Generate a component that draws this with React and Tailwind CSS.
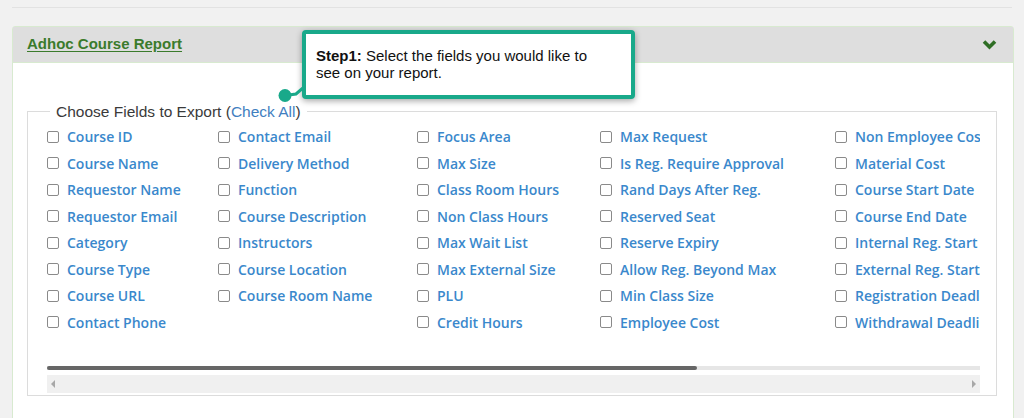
import React from 'react';

const columns = [
    { w: 'w-[171px]', items: ['Course ID', 'Course Name', 'Requestor Name', 'Requestor Email', 'Category', 'Course Type', 'Course URL', 'Contact Phone'] },
    { w: 'w-[199px]', items: ['Contact Email', 'Delivery Method', 'Function', 'Course Description', 'Instructors', 'Course Location', 'Course Room Name'] },
    { w: 'w-[183px]', items: ['Focus Area', 'Max Size', 'Class Room Hours', 'Non Class Hours', 'Max Wait List', 'Max External Size', 'PLU', 'Credit Hours'] },
    { w: 'w-[235px]', items: ['Max Request', 'Is Reg. Require Approval', 'Rand Days After Reg.', 'Reserved Seat', 'Reserve Expiry', 'Allow Reg. Beyond Max', 'Min Class Size', 'Employee Cost'] },
    { w: 'w-[200px]', items: ['Non Employee Cost', 'Material Cost', 'Course Start Date', 'Course End Date', 'Internal Reg. Start Date', 'External Reg. Start Date', 'Registration Deadline', 'Withdrawal Deadline'] },
];

const FieldCheck = ({ label }) => (
    <label className="flex items-center h-[26.5px] whitespace-nowrap cursor-pointer">
        <span className="w-[12px] h-[12px] shrink-0 rounded-[2px] border border-[#8a8a8a] bg-white" />
        <span className="ml-[8px] text-[14px] font-semibold text-[#3a88cc] font-['Open_Sans',sans-serif]">{label}</span>
    </label>
);

export default function App() {
    return (
        <div className="w-[1024px] h-[418px] overflow-hidden bg-[#f1f1f1] font-['Liberation_Sans',Arial,sans-serif]">
            <div className="h-[7px]" />
            <div className="mx-3 h-px bg-[#e2e2e2]" />

            {/* Panel */}
            <div className="relative ml-3 mt-[18px] w-[1002px] h-[400px] border border-[#d8ead0] rounded-t-[3px] bg-white">
                <div className="flex items-center justify-between h-[36px] pl-[14px] pr-[16px] bg-[#dedede] border-b border-[#d8ead0]">
                    <span className="text-[15px] font-bold text-[#3b7b2c] underline underline-offset-2">Adhoc Course Report</span>
                    <svg width="15" height="11" viewBox="0 0 15 11">
                        <polyline points="2,2.5 7.5,8 13,2.5" fill="none" stroke="#2f6e25" strokeWidth="3.6" />
                    </svg>
                </div>

                {/* Fields */}
                <fieldset className="mt-[37px] ml-[14px] mr-[16px] border border-[#dcdcdc] pl-[19px] pr-[16px] pb-[2px]">
                    <legend className="ml-[3px] px-[6px] text-[15.5px] text-[#3a3a3a]">
                        Choose Fields to Export (<span className="text-[#3f80c0]">Check All</span>)
                    </legend>
                    <div className="w-[933px] overflow-hidden">
                        <div className="flex">
                            {columns.map((col, i) => (
                                <div key={i} className={`${col.w} shrink-0 flex flex-col`}>
                                    {col.items.map((it) => <FieldCheck key={it} label={it} />)}
                                </div>
                            ))}
                        </div>
                        <div className="h-[31px]" />
                        {/* scrollbar */}
                        <div className="relative h-[4px] bg-[#e6e6e6]">
                            <div className="absolute left-0 top-0 h-[4px] w-[650px] rounded-full bg-[#666]" />
                        </div>
                        <div className="mt-[5px] h-[18px] bg-[#f0f0f0] flex items-center justify-between px-[4px]">
                            <svg width="5" height="8" viewBox="0 0 5 8"><polygon points="4,0 4,8 0,4" fill="#a8a8a8" /></svg>
                            <svg width="5" height="8" viewBox="0 0 5 8"><polygon points="1,0 1,8 5,4" fill="#a8a8a8" /></svg>
                        </div>
                    </div>
                </fieldset>

                {/* Tooltip */}
                <div className="absolute left-[289px] top-[3px] w-[333px] h-[69px] bg-white border-[4px] border-[#19a98a] rounded-[4px] shadow-[0_2px_6px_rgba(0,0,0,0.35)] pl-[10px] pt-[13px] text-[15px] leading-[17px] text-[#111]">
                    <b>Step1:</b> Select the fields you would like to<br />see on your report.
                </div>
                <svg className="absolute left-[264px] top-[60px]" width="30" height="16" viewBox="0 0 30 16">
                    <polyline points="8,8.5 19,7 27,0" fill="none" stroke="#19a98a" strokeWidth="3" />
                    <circle cx="8" cy="8.5" r="6.5" fill="#19a98a" />
                </svg>
            </div>
        </div>
    );
}
